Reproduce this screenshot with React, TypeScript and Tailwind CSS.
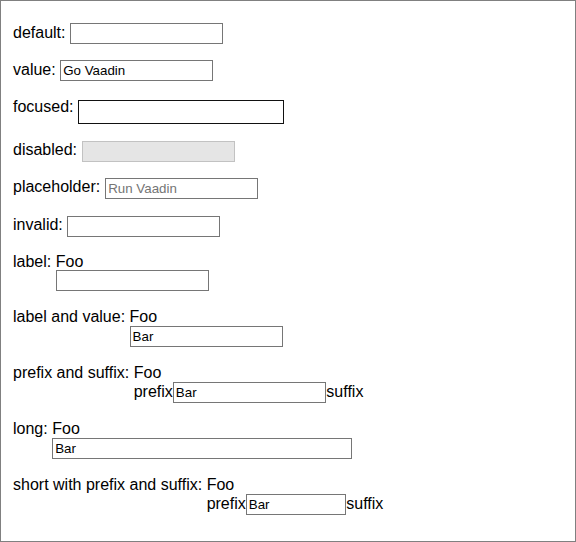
import React from "react";

const font = { fontFamily: '"Liberation Sans", Arial, sans-serif' };

type InputProps = {
  value?: string;
  placeholder?: string;
  w?: string;
  variant?: "normal" | "focused" | "disabled";
};

function Box({ value, placeholder, w = "w-[153px]", variant = "normal" }: InputProps) {
  let cls =
    "box-border h-[21px] border border-[#767676] bg-white px-[2px] text-[13.33px] leading-[15px] text-black outline-none placeholder:text-[#757575]";
  if (variant === "focused") cls = "box-border h-[24px] border border-[#111111] bg-white px-[2px] text-[13.33px] text-black outline-none";
  if (variant === "disabled") cls = "box-border h-[21px] border border-[#c2c2c2] bg-[#e5e5e5] px-[2px] text-[13.33px] text-black outline-none";
  return (
    <input
      readOnly
      disabled={variant === "disabled"}
      defaultValue={value}
      placeholder={placeholder}
      className={`${cls} ${w} shrink-0`}
      style={font}
    />
  );
}

function Simple({ label, mt, children, gap = "gap-[4.5px]" }: { label: string; mt: string; children: React.ReactNode; gap?: string }) {
  return (
    <div className={`flex items-start ${gap} ${mt}`}>
      <span className="leading-[18px] whitespace-nowrap mt-[0.5px]">{label}</span>
      {children}
    </div>
  );
}

function Labeled({
  label,
  mt,
  foo,
  value,
  prefix,
  suffix,
  w,
}: {
  label: string;
  mt: string;
  foo: string;
  value?: string;
  prefix?: string;
  suffix?: string;
  w?: string;
}) {
  return (
    <div className={`flex items-start gap-[4.5px] ${mt}`}>
      <span className="leading-[18px] whitespace-nowrap">{label}</span>
      <div className="flex flex-col">
        <div className={`leading-[18px] ${foo}`}>Foo</div>
        <div className="flex items-start">
          {prefix && <span className="leading-[18px] mt-[1.5px]">{prefix}</span>}
          <Box value={value} w={w} />
          {suffix && <span className="leading-[18px] mt-[1.5px] pl-[0.5px]">{suffix}</span>}
        </div>
      </div>
    </div>
  );
}

export default function App() {
  return (
    <div
      className="box-border flex h-[542px] w-[576px] flex-col border border-[#808080] bg-white pl-[12px] pt-[22px] text-[16px] text-black"
      style={font}
    >
      <Simple label="default:" mt="mt-0">
        <Box />
      </Simple>
      <Simple label="value:" mt="mt-[16px]">
        <Box value="Go Vaadin" />
      </Simple>
      <Simple label="focused:" mt="mt-[16px]">
        <div className="mt-[2px]">
          <Box variant="focused" w="w-[206px]" />
        </div>
      </Simple>
      <Simple label="disabled:" mt="mt-[17px]" gap="gap-[5px]">
        <Box variant="disabled" />
      </Simple>
      <Simple label="placeholder:" mt="mt-[16px]" gap="gap-[5px]">
        <Box placeholder="Run Vaadin" />
      </Simple>
      <Simple label="invalid:" mt="mt-[17px]" gap="gap-[4px]">
        <Box />
      </Simple>
      <Labeled label="label:" mt="mt-[16px]" foo="h-[17px]" />
      <Labeled label="label and value:" mt="mt-[17px]" foo="h-[18px]" value="Bar" />
      <Labeled label="prefix and suffix:" mt="mt-[17px]" foo="h-[18px]" value="Bar" prefix="prefix" suffix="suffix" />
      <Labeled label="long:" mt="mt-[17px]" foo="h-[18px]" value="Bar" w="w-[300px]" />
      <Labeled
        label="short with prefix and suffix:"
        mt="mt-[17px]"
        foo="h-[18px]"
        value="Bar"
        prefix="prefix"
        suffix="suffix"
        w="w-[100px]"
      />
    </div>
  );
}
